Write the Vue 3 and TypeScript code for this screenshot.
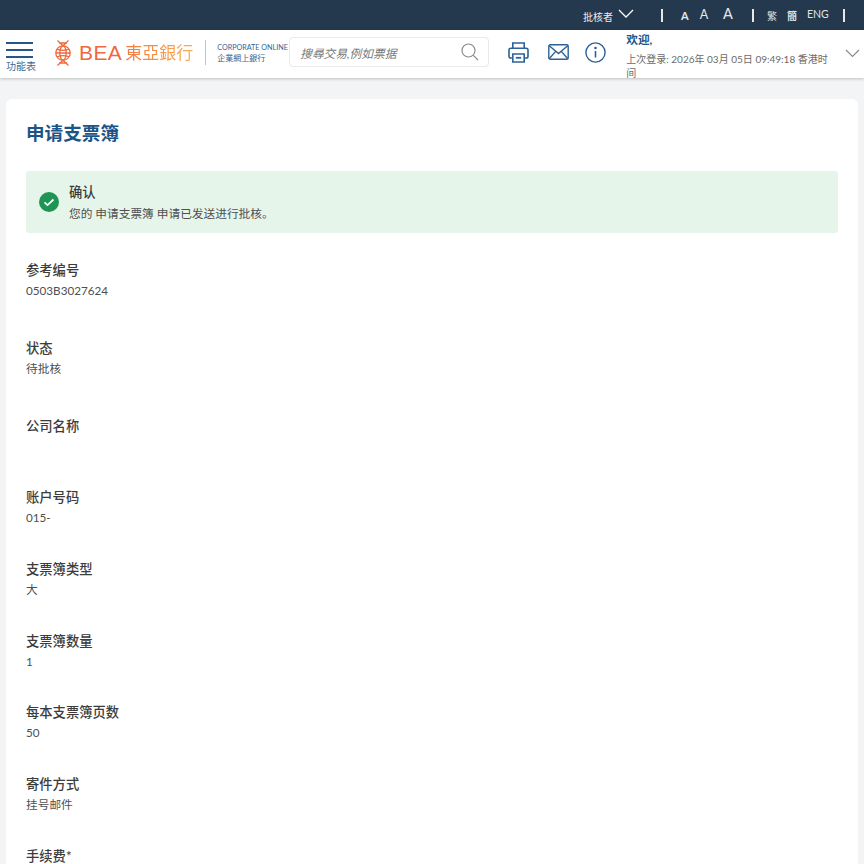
<script setup lang="ts">
const fields: { label: string; value: string; cls?: string }[] = [
  { label: '参考编号', value: '0503B3027624', cls: 'wide' },
  { label: '状态', value: '待批核', cls: 'wide' },
  { label: '公司名称', value: '' },
  { label: '账户号码', value: '015-' },
  { label: '支票簿类型', value: '大' },
  { label: '支票簿数量', value: '1' },
  { label: '每本支票簿页数', value: '50' },
  { label: '寄件方式', value: '挂号邮件' },
  { label: '手续费*', value: '' },
]
</script>

<template>
  <div class="page">
    <div class="topbar">
      <span class="role">批核者</span>
      <svg class="role-chev" width="16" height="9" viewBox="0 0 16 9"><path d="M1 1l7 7 7-7" fill="none" stroke="#fff" stroke-width="1.3" /></svg>
      <i class="sep s1"></i>
      <span class="a a1">A</span><span class="a a2">A</span><span class="a a3">A</span>
      <i class="sep s2"></i>
      <span class="lang l1">繁</span><span class="lang l2">簡</span><span class="lang l3">ENG</span>
      <i class="sep s3"></i>
    </div>
    <header class="header">
      <div class="menu">
        <div class="burger"><i></i><i></i><i></i></div>
        <span>功能表</span>
      </div>
      <svg class="emblem" width="18" height="26" viewBox="0 0 18 26" fill="none" stroke="#ef6a3c" stroke-width="1.3">
        <circle cx="9" cy="13" r="7.2" />
        <ellipse cx="9" cy="13" rx="3.2" ry="7.2" />
        <path d="M1.8 13h14.4M3 9.2c3.5 1.4 8.5 1.4 12 0M3 16.8c3.5-1.4 8.5-1.4 12 0" />
        <path d="M3.5 0.5L9 5.8 14.5 0.5M5 3h8M3.5 25.5L9 20.2l5.5 5.3M5 23h8" />
      </svg>
      <span class="bea">BEA</span>
      <span class="bank">東亞銀行</span>
      <i class="logo-sep"></i>
      <div class="corp">
        <span class="corp-en">CORPORATE ONLINE</span>
        <span class="corp-zh">企業網上銀行</span>
      </div>
      <div class="search">
        <span>搜尋交易,例如票据</span>
        <svg width="18" height="18" viewBox="0 0 18 18" fill="none" stroke="#8c8c8c" stroke-width="1.2"><circle cx="7.5" cy="7.5" r="6.5" /><path d="M12.3 12.3L17 17" /></svg>
      </div>
      <svg class="ico print" width="21" height="21" viewBox="0 0 21 21" fill="none" stroke="#2c6296" stroke-width="1.6">
        <path d="M4.8 6.2V1h11.4v5.2" />
        <path d="M4.8 16H2.8A1.8 1.8 0 0 1 1 14.2V8a1.8 1.8 0 0 1 1.8-1.8h15.4A1.8 1.8 0 0 1 20 8v6.2a1.8 1.8 0 0 1-1.8 1.8h-2" />
        <path d="M4.8 12h11.4v8H4.8z" />
        <path d="M7.8 15.8h5.4" stroke-width="1.8" />
      </svg>
      <svg class="ico mail" width="21" height="16" viewBox="0 0 21 16" fill="none" stroke="#2c6296" stroke-width="1.4">
        <rect x="0.8" y="0.8" width="19.4" height="14.4" rx="1.5" />
        <path d="M1 1.5l9.5 8 9.5-8M1.2 14.8l6.5-7.4M19.8 14.8l-6.5-7.4" />
      </svg>
      <svg class="ico info" width="21" height="21" viewBox="0 0 21 21" fill="none" stroke="#2c6296" stroke-width="1.4">
        <circle cx="10.5" cy="10.5" r="9.6" />
        <path d="M10.5 9v6.5" stroke-width="1.6" />
        <circle cx="10.5" cy="6" r="0.6" />
      </svg>
      <div class="welcome">
        <div class="hello">欢迎,</div>
        <div class="last">上次登录: 2026年 03月 05日 09:49:18 香港时间</div>
      </div>
      <svg class="head-chev" width="15" height="9" viewBox="0 0 15 9"><path d="M1 1l6.5 6.5L14 1" fill="none" stroke="#8a8a8a" stroke-width="1.2" /></svg>
    </header>
    <main class="main">
      <section class="card">
        <h1>申请支票簿</h1>
        <div class="alert">
          <svg width="20" height="20" viewBox="0 0 20 20"><circle cx="10" cy="10" r="10" fill="#1e9455" /><path d="M5.5 10.3l3 2.8 6-5.6" fill="none" stroke="#fff" stroke-width="1.8" /></svg>
          <div>
            <div class="alert-title">确认</div>
            <div class="alert-text">您的 申请支票簿 申请已发送进行批核。</div>
          </div>
        </div>
        <div v-for="f in fields" :key="f.label" class="field" :class="f.cls">
          <div class="label">{{ f.label }}</div>
          <div class="value">{{ f.value }}</div>
        </div>
      </section>
    </main>
  </div>
</template>

<style scoped>
.page {
  width: 864px;
  height: 864px;
  overflow: hidden;
  background: #f3f4f6;
  font-family: Lato, "Noto Sans CJK SC", sans-serif;
  color: #3a3a3a;
}
.topbar {
  height: 30px;
  background: #25394e;
  display: flex;
  align-items: center;
  color: #fff;
  padding-left: 583px;
  box-sizing: border-box;
}
.role { font-size: 10px; color: #e8ebee; margin-top: 2px; }
.role-chev { margin-left: 5px; margin-top: -4px; }
.sep { width: 2px; height: 13px; background: #e6e9ec; display: block; }
.s1 { margin-left: 27px; }
.a { font-weight: 700; color: #e5e8eb; line-height: 1; }
.a1 { font-size: 11px; margin-left: 18px; }
.a2 { font-size: 12.5px; margin-left: 11px; font-weight: 400; }
.a3 { font-size: 14.5px; margin-left: 15px; font-weight: 400; margin-top: -2px; }
.s2 { margin-left: 19px; }
.lang { font-size: 10px; color: #dfe3e7; line-height: 1; }
.l1 { margin-left: 13px; margin-top: 2px; }
.l2 { margin-left: 10px; font-weight: 700; margin-top: 2px; }
.l3 { margin-left: 10px; margin-top: -2px; font-size: 10.5px; }
.s3 { margin-left: 14px; }
.header {
  height: 48px;
  background: #fff;
  display: flex;
  align-items: center;
  box-shadow: 0 1px 3px rgba(0, 0, 0, 0.22);
  position: relative;
}
.menu {
  width: 38px;
  margin-left: 6px;
  display: flex;
  flex-direction: column;
  font-size: 10px;
  color: #3d6a96;
  line-height: 12px;
  margin-top: 6px;
}
.burger { width: 27px; display: flex; flex-direction: column; gap: 4.6px; margin-bottom: 2px; }
.burger i { display: block; height: 2.2px; background: #25578a; }
.emblem { margin-left: 10px; margin-bottom: 2px; }
.bea {
  font-size: 21px;
  letter-spacing: 0.4px;
  color: #f0683f;
  margin-left: 7px;
  font-family: "Liberation Sans", sans-serif;
  line-height: 1;
  margin-bottom: 4px;
}
.bank {
  font-size: 17px;
  margin-left: 3px;
  font-weight: 400;
  background: linear-gradient(90deg, #f07a3f, #f9ad55);
  -webkit-background-clip: text;
  background-clip: text;
  color: transparent;
  line-height: 1;
  margin-bottom: 4px;
}
.logo-sep { width: 1px; height: 25px; background: #f3b49a; margin-left: 12px; margin-bottom: 3px; }
.corp { display: flex; flex-direction: column; margin-left: 11px; width: 72px; white-space: nowrap; line-height: 11px; margin-bottom: 3px; }
.corp-en { font-size: 7.2px; color: #2f6599; }
.corp-zh { font-size: 8px; color: #2f6599; }
.search {
  width: 200px;
  height: 30px;
  box-sizing: border-box;
  border: 1px solid #e9e9e9;
  border-radius: 4px;
  display: flex;
  align-items: center;
  justify-content: space-between;
  padding: 0 9px 0 10px;
  margin-bottom: 4px;
  font-size: 11.7px;
  font-style: italic;
  color: #777;
}
.ico { display: block; flex: none; margin-bottom: 4px; }
.print { margin-left: 19px; }
.mail { margin-left: 19px; }
.info { margin-left: 16px; }
.welcome { width: 205px; margin-left: 20px; margin-top: 2px; }
.hello { font-size: 11.7px; font-weight: 700; color: #20568a; line-height: 18px; margin-bottom: 4px; }
.last { font-size: 10px; color: #6b6b6b; line-height: 14px; }
.head-chev { margin-left: 14px; margin-bottom: 1px; }
.main { padding: 21px 6px 0; }
.card {
  background: #fff;
  border-radius: 6px;
  padding: 21px 20px 0;
  height: 900px;
}
h1 {
  margin: 0;
  font-size: 18.6px;
  line-height: 27px;
  font-weight: 700;
  color: #1c5488;
}
.alert {
  margin-top: 24px;
  height: 62px;
  background: #e6f5ea;
  border-radius: 3px;
  display: flex;
  align-items: center;
  gap: 10px;
  padding-left: 13px;
}
.alert-title { font-size: 13.3px; font-weight: 500; color: #3a3a3a; line-height: 20px; margin-top: 1px; }
.alert-text { font-size: 11.7px; color: #4f4f4f; line-height: 20px; margin-top: 1px; }
.field { height: 71.7px; }
.wide { height: 78px; }
.alert + .field { margin-top: 26.5px; }
.label { font-size: 13.3px; font-weight: 500; color: #3c3c3c; line-height: 20px; }
.value { font-size: 11.7px; color: #4f4f4f; line-height: 20px; }
</style>
